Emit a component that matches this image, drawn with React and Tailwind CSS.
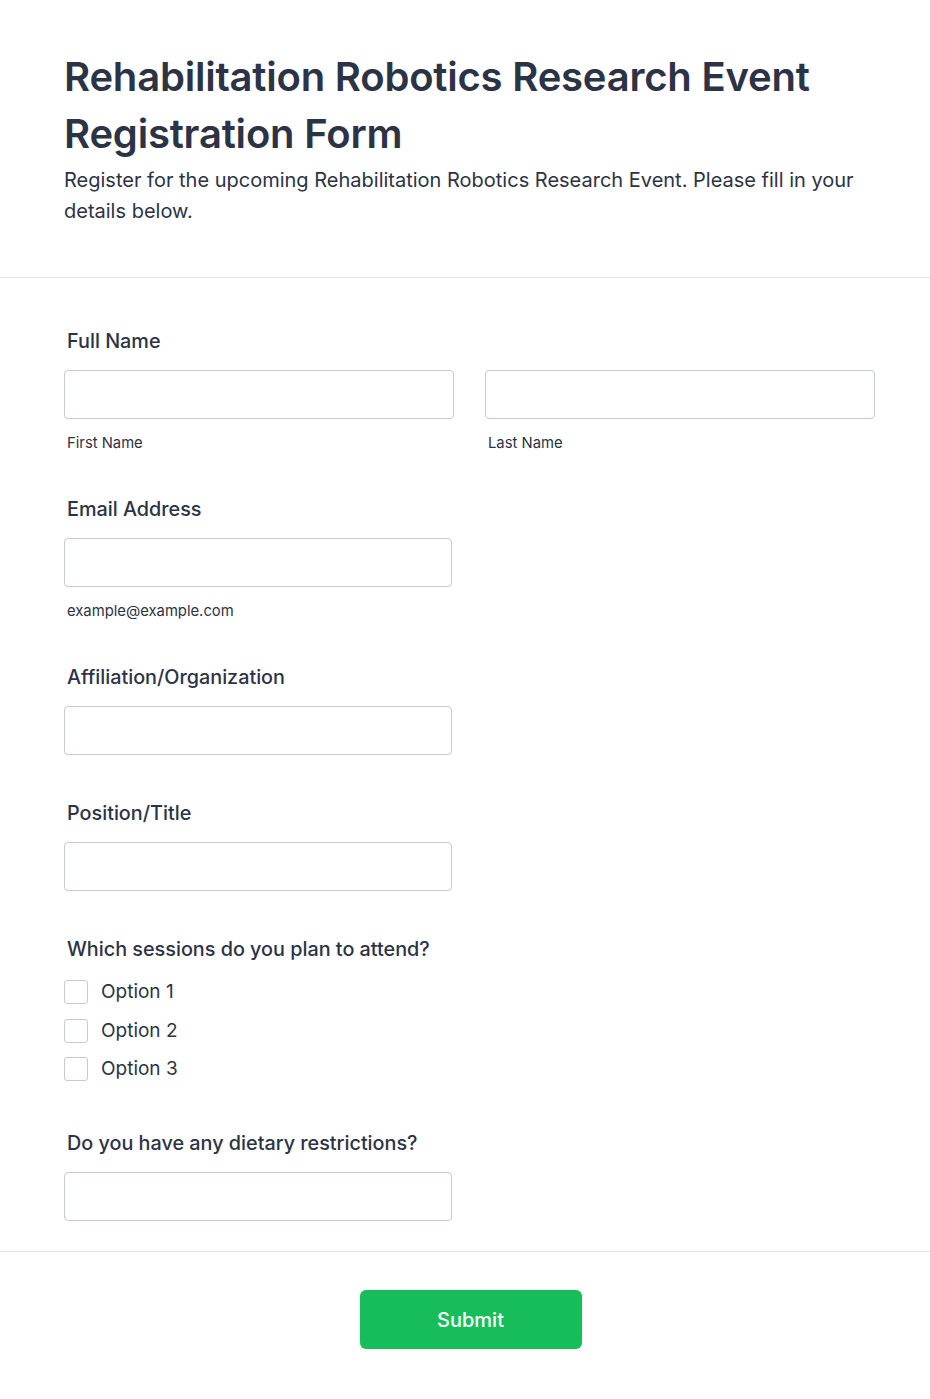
import React from "react";

const font = { fontFamily: "Inter, 'Noto Sans', sans-serif" };

function Label({ children }) {
  return (
    <div className="pl-[3px] text-[19.8px] leading-7 font-medium text-[#2c3345]">{children}</div>
  );
}

function Input({ className = "" }) {
  return (
    <input
      type="text"
      className={`block h-[49px] rounded-[4px] border border-[#c3cad8] bg-white ${className}`}
    />
  );
}

function Sub({ children }) {
  return <div className="mt-[14px] pl-[3px] text-[14.8px] leading-5 text-[#2c3345]">{children}</div>;
}

export default function App() {
  return (
    <div className="min-h-[1399px] w-full bg-white text-[#2c3345]" style={font}>
      <div className="px-16 pt-[48px] pb-[50px] border-b border-[#e3e5ea]">
        <h1 className="text-[40px] leading-[57px] font-semibold text-[#2c3345] tracking-[-0.2px]">
          Rehabilitation Robotics Research Event Registration Form
        </h1>
        <p className="mt-[3px] text-[20px] leading-[31px] text-[#2c3345]">
          Register for the upcoming Rehabilitation Robotics Research Event. Please fill in your details below.
        </p>
      </div>

      <div className="px-16 pt-[49px] pb-[30px] border-b border-[#e3e5ea]">
        <div>
          <Label>Full Name</Label>
          <div className="mt-[15px] flex gap-[31px] w-[811px]">
            <div className="flex-1">
              <Input className="w-full" />
              <Sub>First Name</Sub>
            </div>
            <div className="flex-1">
              <Input className="w-full" />
              <Sub>Last Name</Sub>
            </div>
          </div>
        </div>

        <div className="mt-[42px]">
          <Label>Email Address</Label>
          <Input className="mt-[15px] w-[388px]" />
          <Sub>example@example.com</Sub>
        </div>

        <div className="mt-[42px]">
          <Label>Affiliation/Organization</Label>
          <Input className="mt-[15px] w-[388px]" />
        </div>

        <div className="mt-[44px]">
          <Label>Position/Title</Label>
          <Input className="mt-[15px] w-[388px]" />
        </div>

        <div className="mt-[44px]">
          <Label>Which sessions do you plan to attend?</Label>
          <div className="mt-[17px] flex flex-col gap-[14.5px]">
            {["Option 1", "Option 2", "Option 3"].map((o) => (
              <label key={o} className="flex items-center gap-[13px]">
                <span className="block h-6 w-6 rounded-[3px] border border-[#c3cad8] bg-white" />
                <span className="text-[19px] leading-6 text-[#2c3345]">{o}</span>
              </label>
            ))}
          </div>
        </div>

        <div className="mt-[48px]">
          <Label>Do you have any dietary restrictions?</Label>
          <Input className="mt-[15px] w-[388px]" />
        </div>
      </div>

      <div className="flex justify-center pt-[38px] pb-[50px]">
        <button className="ml-[11px] h-[59px] w-[222px] rounded-[6px] bg-[#18bd5b] text-[20px] font-medium text-white">
          Submit
        </button>
      </div>
    </div>
  );
}
